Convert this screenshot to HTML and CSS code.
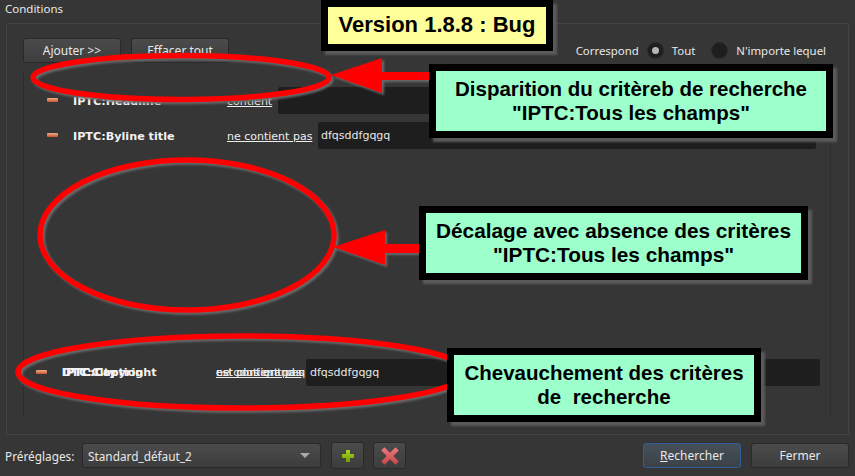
FILE: index.html
```html
<!DOCTYPE html>
<html lang="fr">
<head>
<meta charset="utf-8">
<title>Conditions</title>
<link rel="stylesheet" href="styles.css">
</head>
<body>
<div class="window">
  <div class="group-title">Conditions</div>
  <section class="group">
    <div class="toolbar">
      <button class="btn">Ajouter &gt;&gt;</button>
      <button class="btn">Effacer tout</button>
      <div class="match">
        <span class="match-label">Correspond</span>
        <span class="radio on"></span><span class="radio-label">Tout</span>
        <span class="radio"></span><span>N'importe lequel</span>
      </div>
    </div>
    <div class="rows">
      <div class="row row-a">
        <span class="minus"></span><span class="name">IPTC:Headline</span>
        <a class="op op-a">contient</a><span class="field field-a"></span>
      </div>
      <div class="row row-b">
        <span class="minus"></span><span class="name">IPTC:Byline title</span>
        <a class="op">ne contient pas</a><span class="field">dfqsddfgqgq</span>
      </div>
      <div class="row row-c">
        <span class="minus"></span>
        <span class="name stack">
          <span>IPTC:Copyright</span><span class="over">IPTC:Caption</span><span class="over">DTC:City</span>
        </span>
        <a class="op stack">
          <span>ne contient pas</span><span class="over">est contient pas</span><span class="over">est plus grand q</span>
        </a>
        <span class="field">dfqsddfgqgq</span>
      </div>
    </div>
  </section>
  <footer class="footer">
    <label class="preset-label">Préréglages:</label>
    <div class="combo"><span>Standard_défaut_2</span><span class="caret"></span></div>
    <button class="btn icon-btn">
      <svg width="14" height="14" viewBox="0 0 14 14"><defs><linearGradient id="plus" x1="0" y1="0" x2="0" y2="1"><stop offset="0" stop-color="#a8d818"/><stop offset="1" stop-color="#6f9c08"/></linearGradient></defs><path d="M5 1h4v4h4v4H9v4H5V9H1V5h4z" fill="url(#plus)"/></svg>
    </button>
    <button class="btn icon-btn">
      <svg width="22" height="22" viewBox="0 0 20 20"><defs><linearGradient id="cross" x1="0" y1="0" x2="0" y2="1"><stop offset="0" stop-color="#ee7a7c"/><stop offset="1" stop-color="#c8444a"/></linearGradient></defs><path d="M2 5l3-3 5 5 5-5 3 3-5 5 5 5-3 3-5-5-5 5-3-3 5-5z" fill="url(#cross)"/></svg>
    </button>
    <button class="btn action primary"><span><u>R</u>echercher</span></button>
    <button class="btn action">Fermer</button>
  </footer>
</div>

<svg class="marks" width="855" height="476" viewBox="0 0 855 476">
  <g fill="none" stroke="#f00" stroke-width="5.5">
    <ellipse cx="181" cy="77.5" rx="148" ry="22"/>
    <ellipse cx="187" cy="235" rx="147" ry="75"/>
    <ellipse cx="242" cy="372" rx="224" ry="36"/>
  </g>
  <path d="M331 75 382 58V72H430V80H382V93Z" fill="#f00"/>
  <path d="M333 247 385 230V244H421V253H385V265Z" fill="#f00"/>
</svg>

<div class="note note-title">Version 1.8.8 : Bug</div>
<div class="note note-1">Disparition du critèreb de recherche<br>"IPTC:Tous les champs"</div>
<div class="note note-2">Décalage avec absence des critères<br>"IPTC:Tous les champs"</div>
<div class="note note-3">Chevauchement des critères<br>de&nbsp; recherche</div>
</body>
</html>
```
FILE: styles.css
```css
* { box-sizing: border-box; }
html, body { margin: 0; height: 100%; }
body {
  position: relative;
  width: 855px;
  height: 476px;
  overflow: hidden;
  background: #363636;
  color: #e8e8e8;
  font-family: "Noto Sans", "Open Sans", sans-serif;
  font-size: 12px;
}
.window {
  display: flex;
  flex-direction: column;
  height: 476px;
  padding: 0 6px 0 5px;
}
.group-title { height: 23px; padding-top: 1px; line-height: 16px; font-size: 11.5px; }
.group {
  flex: none;
  height: 412px;
  margin-left: 1px;
  padding: 14px 17px 17px 16px;
  border: 1px solid #444;
  border-radius: 2px;
  display: flex;
  flex-direction: column;
}
.toolbar {
  display: flex;
  align-items: center;
  gap: 10px;
  height: 25px;
}
.btn {
  width: 98px;
  height: 25px;
  padding: 0;
  border: 1px solid #292929;
  border-radius: 3px;
  background: linear-gradient(#4b4b4b, #3d3d3d);
  color: #e8e8e8;
  font: inherit;
}
.match {
  margin-left: auto;
  margin-right: 5px;
  display: flex;
  align-items: center;
  gap: 8px;
  font-size: 11.4px;
}
.radio {
  width: 17px;
  height: 17px;
  border-radius: 50%;
  background: #1e1e1e;
  border: 1px solid #2a2a2a;
  position: relative;
}
.radio.on::after {
  content: "";
  position: absolute;
  left: 4px;
  top: 4px;
  width: 7px;
  height: 7px;
  border-radius: 50%;
  background: #b5b5b5;
}
.radio-label { margin-right: 8px; }
.rows {
  flex: 1;
  margin-top: 8px;
  border-left: 1px solid #2e2e2e;
  border-right: 1px solid #2e2e2e;
  display: flex;
  flex-direction: column;
  font-family: "DejaVu Sans", sans-serif;
  font-size: 11px;
}
.row { display: flex; align-items: center; height: 27px; }
.row-a { margin-top: 16px; padding-left: 23px; }
.row-b { margin-top: 8px; padding-left: 23px; }
.row-c { margin-top: 210px; padding-left: 12px; margin-right: 10px; }
.minus {
  flex: none;
  width: 11px;
  height: 4px;
  margin-top: -1px;
  border-radius: 1px;
  background: linear-gradient(#f2aa8c, #c9552f);
}
.name {
  flex: none;
  width: 154px;
  margin-left: 15px;
  padding-top: 1px;
  font-size: 11.2px;
  font-weight: 700;
  color: #f2f2f2;
}
.op { flex: none; width: 91px; padding-top: 1px; color: #eee; text-decoration: underline; white-space: nowrap; }
.op-a { width: 51px; }
.field {
  flex: 1;
  height: 27px;
  margin-right: 14px;
  padding-left: 3px;
  line-height: 28px;
  background: #1e1e1e;
  border-radius: 2px;
  color: #e8e8e8;
}
.row-c .field { margin-right: 0; padding-left: 4px; line-height: 27px; }
.row-c .op { width: 90px; }
.row-c .name, .row-c .op { padding-top: 0; }
.stack { position: relative; display: block; height: 14px; line-height: 14px; }
.stack .over { position: absolute; left: 0; top: 0; white-space: nowrap; }
.footer {
  display: flex;
  align-items: center;
  height: 41px;
}
.preset-label { width: 77px; font-size: 11.8px; }
.combo {
  display: flex;
  align-items: center;
  justify-content: space-between;
  width: 239px;
  height: 25px;
  padding: 0 10px 0 5px;
  border: 1px solid #292929;
  border-radius: 3px;
  background: linear-gradient(#4b4b4b, #3d3d3d);
  font-size: 11.8px;
}
.caret {
  width: 0;
  height: 0;
  border-left: 5px solid transparent;
  border-right: 5px solid transparent;
  border-top: 5px solid #aaa;
}
.icon-btn {
  width: 33px;
  height: 27px;
  margin-left: 10px;
  display: flex;
  align-items: center;
  justify-content: center;
}
.icon-btn + .icon-btn { margin-left: 9px; }
.action { margin-left: 10px; }
.primary {
  margin-left: auto;
  border-color: #2d5f96;
  background: linear-gradient(#465058, #3c4248);
}
.marks {
  position: absolute;
  left: 0;
  top: 0;
  filter: drop-shadow(2px 2px 1px #6a6a6a);
}
.note {
  position: absolute;
  display: flex;
  align-items: center;
  justify-content: center;
  text-align: center;
  padding-bottom: 1px;
  border: 7px solid #000;
  background: #9cffcc;
  color: #000;
  font-family: "Liberation Sans", Arial, sans-serif;
  font-weight: 700;
  font-size: 20.5px;
  line-height: 24px;
  box-shadow: 4px 4px 2px #5a5a5a;
}
.note-title { left: 321px; top: 0; width: 232px; height: 51px; background: #ffff99; font-size: 22px; }
.note-1 { left: 429px; top: 64px; width: 404px; height: 74px; }
.note-2 { left: 419px; top: 206px; width: 389px; height: 74px; font-size: 20.8px; }
.note-3 { left: 447px; top: 348px; width: 314px; height: 74px; }
```
